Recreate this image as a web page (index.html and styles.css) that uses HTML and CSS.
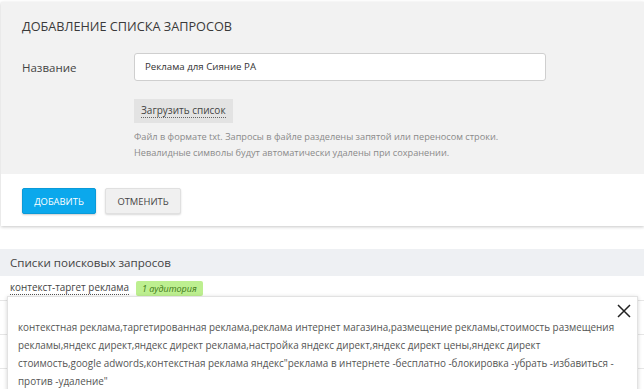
FILE: index.html
```html
<!DOCTYPE html>
<html lang="ru">
<head>
<meta charset="utf-8">
<link rel="stylesheet" href="styles.css">
</head>
<body>
<div class="card">
  <div class="card-body">
    <h1 class="title">ДОБАВЛЕНИЕ СПИСКА ЗАПРОСОВ</h1>
    <div class="form-row">
      <label class="label">Название</label>
      <div class="input">Реклама для Сияние РА</div>
    </div>
    <div class="field-col">
      <div class="upload"><span>Загрузить список</span></div>
      <p class="help">Файл в формате txt. Запросы в файле разделены запятой или переносом строки.<br>Невалидные символы будут автоматически удалены при сохранении.</p>
    </div>
  </div>
  <div class="card-footer">
    <button class="btn btn-primary">ДОБАВИТЬ</button>
    <button class="btn btn-default">ОТМЕНИТЬ</button>
  </div>
</div>

<div class="lists">
  <div class="lists-head">Списки поисковых запросов</div>
  <div class="row">
    <span class="link">контекст-таргет реклама</span>
    <span class="badge">1 аудитория</span>
  </div>
  <div class="row-empty"></div>
  <div class="row-empty"></div>
  <div class="row-empty"></div>
  <div class="popover">
    <svg class="close" width="14" height="14" viewBox="0 0 14 14"><path d="M1 1 L13 13 M13 1 L1 13" stroke="#222" stroke-width="1.5" fill="none"/></svg>
    <p class="pop-text">контекстная реклама,таргетированная реклама,реклама интернет магазина,размещение рекламы,стоимость размещения рекламы,яндекс директ,яндекс директ реклама,настройка яндекс директ,яндекс директ цены,яндекс директ стоимость,google adwords,контекстная реклама яндекс"реклама в интернете -бесплатно -блокировка -убрать -избавиться -<wbr>против -удаление"</p>
  </div>
</div>
</body>
</html>
```

FILE: styles.css
```css
html, body {
  margin: 0;
  padding: 0;
  background: #fff;
}
body {
  font-family: "Open Sans", "Noto Sans", sans-serif;
  color: #444;
  overflow: hidden;
  height: 389px;
}
.card {
  margin: 2px 0 0 1px;
  background: #fff;
  box-shadow: 0 1px 3px rgba(0,0,0,0.22);
}
.card-body {
  background: #f2f2f2;
  padding: 13px 21px 13px 21px;
}
.title {
  margin: 0;
  font-size: 12.7px;
  font-weight: 400;
  line-height: 22px;
  color: #3a3a3a;
}
.form-row {
  display: flex;
  align-items: center;
  margin-top: 16px;
}
.label {
  width: 112px;
  font-size: 11.5px;
  color: #444;
}
.input {
  width: 412px;
  height: 28px;
  box-sizing: border-box;
  border: 1px solid #cfcfcf;
  border-radius: 3px;
  background: #fff;
  font-size: 9.7px;
  line-height: 26px;
  padding-left: 10px;
  color: #333;
}
.field-col {
  margin-left: 112px;
  margin-top: 16px;
}
.upload {
  display: inline-block;
  background: #e3e3e3;
  height: 24px;
  padding: 0 7px;
  font-size: 10px;
  line-height: 22px;
  color: #444;
}
.upload span {
  border-bottom: 1px dotted #666;
}
.help {
  margin: 6px 0 0;
  font-size: 9.2px;
  line-height: 16px;
  color: #8a8a8a;
}
.card-footer {
  display: flex;
  gap: 9px;
  padding: 14px 21px 12px;
}
.btn {
  height: 26px;
  box-sizing: border-box;
  font-family: "Open Sans", sans-serif;
  font-size: 9.4px;
  border-radius: 2px;
  padding: 0;
  cursor: pointer;
}
.btn-primary {
  width: 74px;
  background: #0ba8ec;
  border: 1px solid #0a9ad8;
  color: #fff;
  box-shadow: 0 1px 2px rgba(0,0,0,0.2);
}
.btn-default {
  width: 76px;
  background: #f0f0f0;
  border: 1px solid #e0e0e0;
  color: #444;
  box-shadow: 0 1px 2px rgba(0,0,0,0.15);
}
.lists {
  position: relative;
  margin-top: 23px;
}
.lists-head {
  background: #eef0f3;
  height: 27px;
  line-height: 27px;
  padding-left: 10px;
  font-size: 11.6px;
  color: #444;
}
.row {
  display: flex;
  align-items: center;
  height: 24px;
  padding-left: 10px;
  border-bottom: 1px solid #e6e6e6;
}
.row-empty {
  height: 33px;
  border-bottom: 1px solid #e6e6e6;
}
.link {
  font-size: 9.9px;
  color: #444;
  border-bottom: 1px dotted #555;
  line-height: 13px;
}
.badge {
  margin-left: 7px;
  background: #bdef90;
  border-radius: 2px;
  padding: 0 6px;
  height: 15px;
  line-height: 15px;
  font-size: 9px;
  font-style: italic;
  color: #3f7a18;
}
.popover {
  position: absolute;
  top: 47px;
  left: 7px;
  right: 6px;
  height: 120px;
  background: #fff;
  border: 1px solid #e2e2e2;
  box-shadow: 0 1px 4px rgba(0,0,0,0.18);
}
.close {
  position: absolute;
  top: 7px;
  right: 6px;
}
.pop-text {
  margin: 0;
  padding: 21px 16px 0 10px;
  font-size: 9.9px;
  line-height: 18px;
  color: #555;
}
```
